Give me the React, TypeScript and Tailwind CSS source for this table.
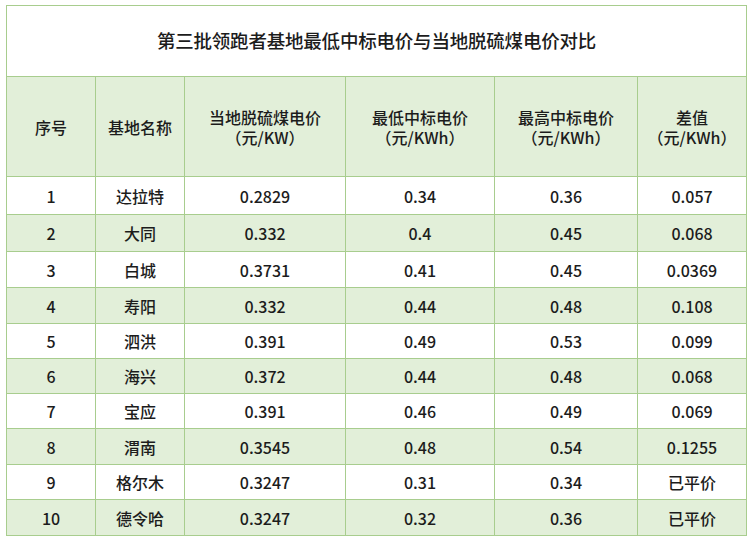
const rows: [string, string, string, string, string, string][] = [
  ["1", "达拉特", "0.2829", "0.34", "0.36", "0.057"],
  ["2", "大同", "0.332", "0.4", "0.45", "0.068"],
  ["3", "白城", "0.3731", "0.41", "0.45", "0.0369"],
  ["4", "寿阳", "0.332", "0.44", "0.48", "0.108"],
  ["5", "泗洪", "0.391", "0.49", "0.53", "0.099"],
  ["6", "海兴", "0.372", "0.44", "0.48", "0.068"],
  ["7", "宝应", "0.391", "0.46", "0.49", "0.069"],
  ["8", "渭南", "0.3545", "0.48", "0.54", "0.1255"],
  ["9", "格尔木", "0.3247", "0.31", "0.34", "已平价"],
  ["10", "德令哈", "0.3247", "0.32", "0.36", "已平价"],
];

// heights of each body row, read off the screenshot
const rowHeights = ["h-[37px]", "h-[36px]", "h-[35px]", "h-[35px]", "h-[34px]", "h-[34px]", "h-[34px]", "h-[35px]", "h-[34px]", "h-[35px]"];

const headers: [string, string?][] = [
  ["序号"],
  ["基地名称"],
  ["当地脱硫煤电价", "（元/KW）"],
  ["最低中标电价", "（元/KWh）"],
  ["最高中标电价", "（元/KWh）"],
  ["差值", "（元/KWh）"],
];

export default function App() {
  return (
    <div className="min-h-screen bg-white pl-[6px] pt-[5px] text-[#1c1c1c] font-['Noto_Sans_CJK_SC','Noto_Sans',sans-serif] font-medium">
      <div className="grid w-[741px] grid-cols-[88px_88px_160px_148px_142px_108px] gap-px bg-[#a8cd8e] p-px">
        <div className="col-span-6 flex h-[70px] items-center justify-center bg-white text-[18.5px] tracking-[-0.2px]">
          第三批领跑者基地最低中标电价与当地脱硫煤电价对比
        </div>

        {headers.map(([line1, line2], i) => (
          <div
            key={i}
            className="flex h-[99px] flex-col items-center justify-center bg-[#e2efd9] text-[16px] leading-[20px]"
          >
            <span>{line1}</span>
            {line2 && <span>{line2}</span>}
          </div>
        ))}

        {rows.map((row, r) =>
          row.map((cell, c) => (
            <div
              key={`${r}-${c}`}
              className={`flex items-center justify-center text-[16px] ${rowHeights[r]} ${
                r % 2 === 1 ? "bg-[#e2efd9]" : "bg-white"
              }`}
            >
              {cell}
            </div>
          ))
        )}
      </div>
    </div>
  );
}
